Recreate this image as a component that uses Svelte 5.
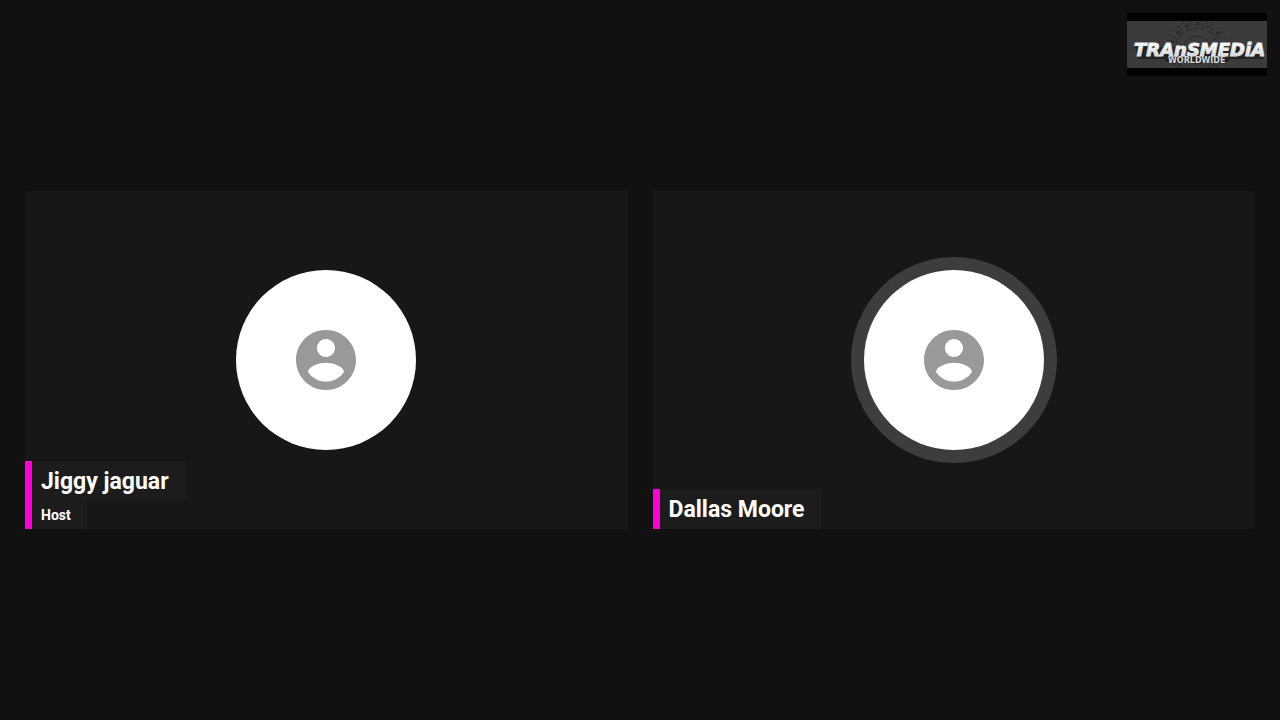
<script lang="ts">
  interface Participant {
    name: string;
    role?: string;
    speaking: boolean;
  }

  const participants: Participant[] = [
    { name: 'Jiggy jaguar', role: 'Host', speaking: false },
    { name: 'Dallas Moore', speaking: true }
  ];
</script>

<main class="stage">
  <svg class="logo" viewBox="0 0 140 63" role="img" aria-label="Transmedia Worldwide">
    <defs>
      <linearGradient id="chrome" x1="0" y1="0" x2="0" y2="1">
        <stop offset="0.3" stop-color="#ffffff" />
        <stop offset="1" stop-color="#bcc3cc" />
      </linearGradient>
      <clipPath id="band"><rect y="8" width="140" height="47" /></clipPath>
    </defs>
    <rect width="140" height="63" fill="#000" />
    <rect y="8" width="140" height="47" fill="#3b3b3b" />
    <g clip-path="url(#band)" fill="none" stroke="#2a2a2a">
      <circle cx="70" cy="37" r="30" stroke-width="2" stroke-dasharray="2 5 1 4" />
      <circle cx="70" cy="37" r="26" stroke-width="3" stroke-dasharray="3 3 1 4" />
      <circle cx="70" cy="37" r="22" stroke-width="2" stroke-dasharray="1 3 2 2" />
      <circle cx="70" cy="37" r="14" stroke-width="1" />
    </g>
    <path d="M8 33h12l-4 13h-5zM20 34h112l5 12h-34l-3 3H40l-3-3H16z" fill="#1b1b1b" opacity="0.7" />
    <text class="brand" x="7" y="43">TRAnSMEDiA</text>
    <text class="tagline" x="41" y="50">WORLDWIDE</text>
  </svg>

  <div class="tiles">
    {#each participants as person (person.name)}
      <section class="tile">
        <div class="avatar" class:speaking={person.speaking}>
          <svg viewBox="0 0 24 24" aria-hidden="true">
            <path d="M12 2C6.48 2 2 6.48 2 12s4.48 10 10 10 10-4.48 10-10S17.52 2 12 2zm0 3c1.66 0 3 1.34 3 3s-1.34 3-3 3-3-1.34-3-3 1.34-3 3-3zm0 14.2c-2.5 0-4.71-1.28-6-3.22.03-1.99 4-3.08 6-3.08 1.99 0 5.97 1.09 6 3.08-1.29 1.94-3.5 3.22-6 3.22z" />
          </svg>
        </div>
        <div class="label">
          <h2>{person.name}</h2>
          {#if person.role}
            <p>{person.role}</p>
          {/if}
        </div>
      </section>
    {/each}
  </div>
</main>

<style>
  :global(body) {
    margin: 0;
    background: #111;
  }

  .stage {
    position: relative;
    display: flex;
    align-items: center;
    min-height: 100vh;
    box-sizing: border-box;
    padding: 0 25px;
    font-family: Roboto, sans-serif;
    color: #fff;
  }

  .logo {
    position: absolute;
    top: 13px;
    right: 13px;
    width: 140px;
    height: 63px;
  }

  .brand {
    font-family: 'DejaVu Sans', sans-serif;
    font-size: 18px;
    font-style: italic;
    font-weight: 700;
    fill: url(#chrome);
    stroke: #e4e7ea;
    stroke-width: 1px;
  }

  .tagline {
    font-family: 'DejaVu Sans', sans-serif;
    font-size: 8px;
    font-weight: 700;
    fill: #d6d6d6;
  }

  .tiles {
    flex: 1;
    display: grid;
    grid-template-columns: 1fr 1fr;
    gap: 25px;
  }

  .tile {
    position: relative;
    display: flex;
    align-items: center;
    justify-content: center;
    aspect-ratio: 16 / 9;
    background: #171717;
  }

  .avatar {
    display: grid;
    place-items: center;
    width: 180px;
    height: 180px;
    border-radius: 50%;
    background: #fff;
  }

  .avatar.speaking {
    box-shadow: 0 0 0 13px #3d3d3d;
  }

  .avatar svg {
    width: 72px;
    height: 72px;
    fill: #999;
  }

  .label {
    position: absolute;
    left: 0;
    bottom: 0;
    display: flex;
    flex-direction: column;
    align-items: flex-start;
    border-left: 7px solid #ff00d4;
  }

  .label h2,
  .label p {
    margin: 0;
    padding: 0 16px 0 9px;
    background: #1c1c1c;
    white-space: nowrap;
  }

  .label h2 {
    padding-top: 2px;
    font-size: 23px;
    font-weight: 700;
    line-height: 38px;
  }

  .label p {
    font-size: 14px;
    font-weight: 700;
    line-height: 28px;
  }
</style>
